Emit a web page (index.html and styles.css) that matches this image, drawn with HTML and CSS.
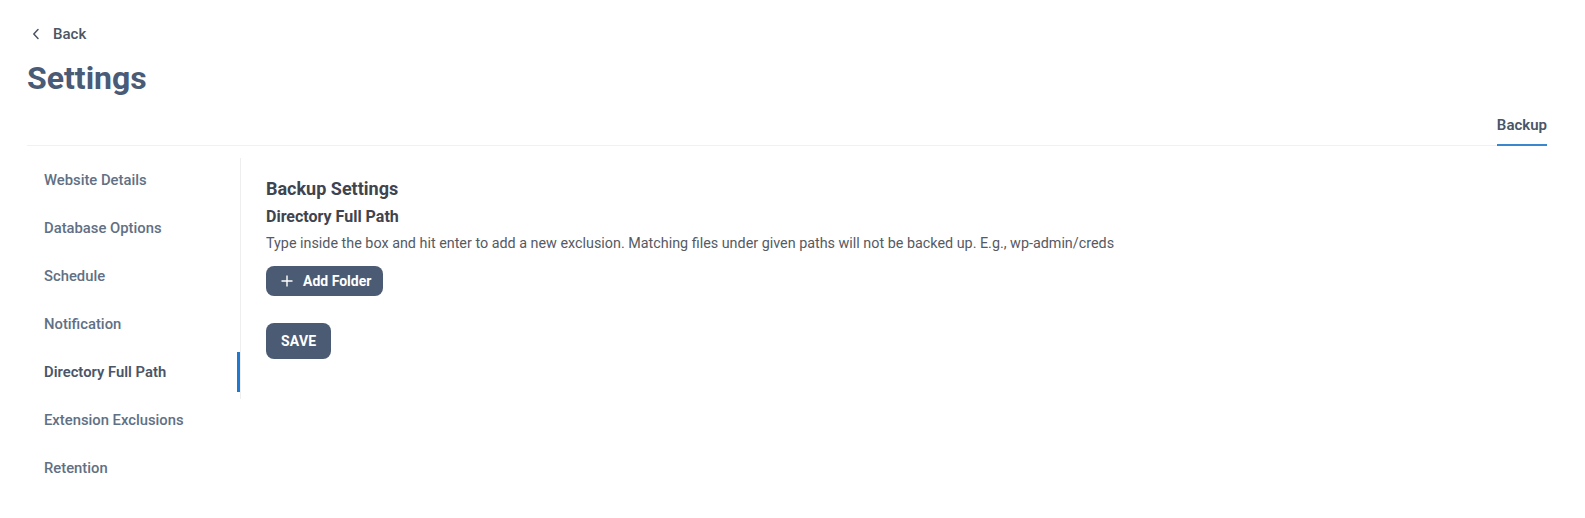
FILE: index.html
```html
<!DOCTYPE html>
<html lang="en">
<head>
<meta charset="utf-8">
<title>Settings</title>
<link rel="stylesheet" href="styles.css">
</head>
<body>
<div class="page">
  <header class="top">
    <a class="back" href="#">
      <svg class="chev" width="8" height="12" viewBox="0 0 8 12" aria-hidden="true"><path d="M6 1.5 L1.8 6 L6 10.5" fill="none" stroke="#4b5563" stroke-width="1.5" stroke-linecap="round" stroke-linejoin="round"/></svg>
      <span>Back</span>
    </a>
    <h1 class="title">Settings</h1>
  </header>
  <nav class="tabs">
    <span class="tab tab-active">Backup</span>
  </nav>
  <div class="body">
    <aside class="side">
      <div class="side-item">Website Details</div>
      <div class="side-item">Database Options</div>
      <div class="side-item">Schedule</div>
      <div class="side-item">Notification</div>
      <div class="side-item side-active">Directory Full Path</div>
      <div class="side-item">Extension Exclusions</div>
      <div class="side-item">Retention</div>
    </aside>
    <main class="panel">
      <h2 class="panel-title">Backup Settings</h2>
      <h3 class="panel-sub">Directory Full Path</h3>
      <p class="panel-desc">Type inside the box and hit enter to add a new exclusion. Matching files under given paths will not be backed up. E.g., wp-admin/creds</p>
      <button class="btn btn-add" type="button">
        <svg width="12" height="12" viewBox="0 0 12 12" aria-hidden="true"><path d="M6 0.5 V11.5 M0.5 6 H11.5" stroke="#ffffff" stroke-width="1.4" fill="none"/></svg>
        <span>Add Folder</span>
      </button>
      <div class="actions">
        <button class="btn btn-save" type="button">SAVE</button>
      </div>
    </main>
  </div>
</div>
</body>
</html>
```
FILE: styles.css
```css
* { box-sizing: border-box; }
html, body { margin: 0; padding: 0; background: #ffffff; }
body {
  font-family: Roboto, "Liberation Sans", sans-serif;
  color: #4a5568;
}
.page {
  padding: 24px 38px 0 27px;
}
.top { display: flex; flex-direction: column; align-items: flex-start; }
.back {
  display: flex;
  align-items: center;
  gap: 13px;
  height: 20px;
  padding-left: 5px;
  font-size: 15px;
  font-weight: 500;
  color: #4b5563;
  text-decoration: none;
  line-height: 20px;
}
.chev { display: block; }
.title {
  margin: 14px 0 0 0;
  font-size: 32px;
  line-height: 40px;
  font-weight: 700;
  color: #495b76;
}
.tabs {
  display: flex;
  justify-content: flex-end;
  margin-top: 17px;
  border-bottom: 1px solid #f1f1f2;
}
.tab {
  font-size: 15px;
  line-height: 20px;
  font-weight: 600;
  color: #4a5568;
  padding: 0 0 9px 0;
  margin-bottom: -1px;
}
.tab-active { border-bottom: 2px solid #3a86cf; }
.body {
  display: flex;
  align-items: flex-start;
}
.side {
  width: 213px;
  flex: none;
  padding-top: 14px;
  display: flex;
  flex-direction: column;
  gap: 8px;
}
.side-item {
  height: 40px;
  display: flex;
  align-items: center;
  padding-left: 17px;
  font-size: 14.8px;
  font-weight: 500;
  color: #617084;
}
.side-active {
  color: #4a5568;
  font-weight: 600;
  border-right: 3px solid #1f78d1;
}
.panel {
  margin-top: 12px;
  border-left: 1px solid #eeeeef;
  padding: 19px 26px 40px 25px;
  flex: 1;
}
.panel-title {
  margin: 0;
  font-size: 18px;
  line-height: 24px;
  font-weight: 700;
  color: #3f444e;
}
.panel-sub {
  margin: 5px 0 0 0;
  font-size: 16px;
  line-height: 22px;
  font-weight: 700;
  color: #3f444e;
}
.panel-desc {
  margin: 6px 0 0 0;
  font-size: 14.35px;
  line-height: 20px;
  color: #555a63;
}
.btn {
  border: none;
  background: #4b5b73;
  color: #ffffff;
  font-family: inherit;
  font-weight: 700;
  font-size: 14px;
  border-radius: 8px;
  cursor: pointer;
}
.btn-add {
  margin-top: 12px;
  height: 30px;
  padding: 0 12px 0 15px;
  display: flex;
  align-items: center;
  gap: 10px;
}
.btn-add svg { display: block; }
.actions { margin-top: 27px; }
.btn-save {
  height: 36px;
  padding: 0 15px;
  letter-spacing: 0.2px;
}
```
